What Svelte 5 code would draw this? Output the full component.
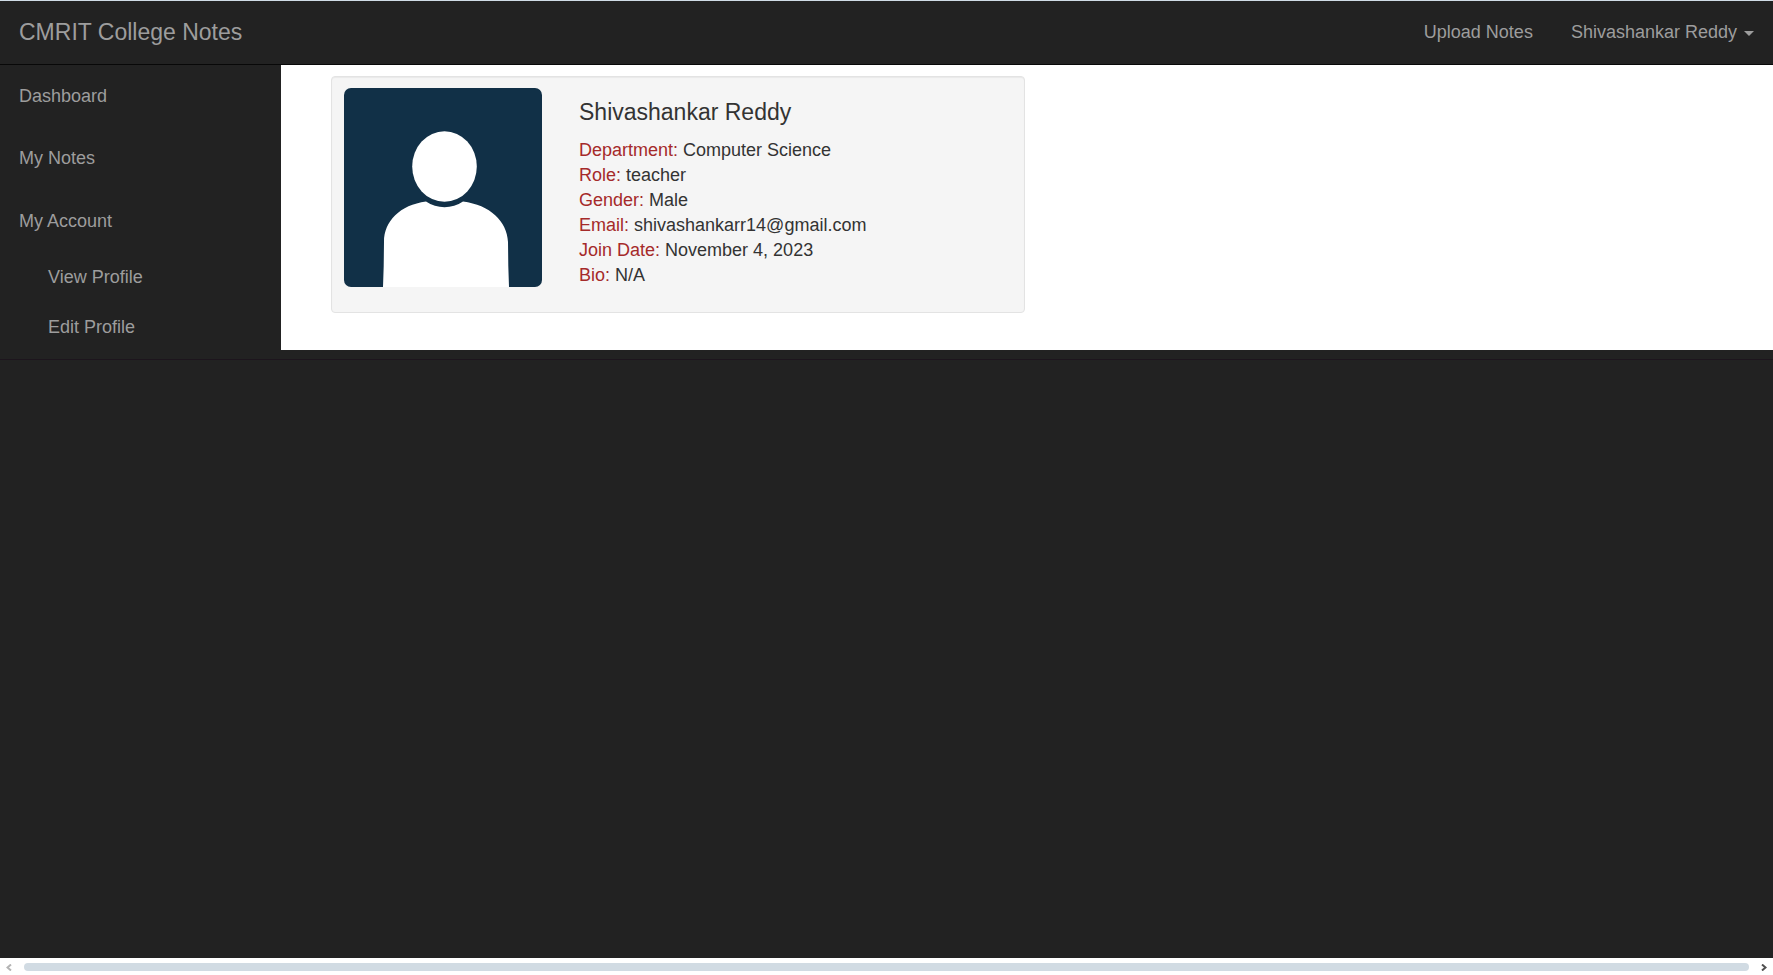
<script>
  const profile = [
    ['Department', 'Computer Science'],
    ['Role', 'teacher'],
    ['Gender', 'Male'],
    ['Email', 'shivashankarr14@gmail.com'],
    ['Join Date', 'November 4, 2023'],
    ['Bio', 'N/A']
  ];
</script>

<div class="page">
  <header class="navbar">
    <a class="brand" href="#home">CMRIT College Notes</a>
    <nav class="top-links" aria-label="Account">
      <a href="#upload">Upload Notes</a>
      <button type="button" class="user">Shivashankar Reddy <span class="caret"></span></button>
    </nav>
  </header>

  <div class="body">
    <nav class="sidebar" aria-label="Main">
      <ul class="menu">
        <li><a href="#dashboard">Dashboard</a></li>
        <li><a href="#notes">My Notes</a></li>
        <li>
          <a href="#account">My Account</a>
          <ul class="submenu">
            <li><a href="#view">View Profile</a></li>
            <li><a href="#edit">Edit Profile</a></li>
          </ul>
        </li>
      </ul>
    </nav>
    <main class="content">
      <section class="well">
        <svg class="avatar" viewBox="0 0 198 199" aria-hidden="true">
          <rect width="198" height="199" rx="7" fill="#113047" />
          <ellipse cx="100.500" cy="78.500" rx="32.300" ry="35.200" fill="#fff" />
          <path d="M82 113.500C56 117 40 133 40 154L39.700 178L39 199H165L164.300 178L164 154C163 133 146 117 119 113.500C108 121 93 121 82 113.500Z" fill="#fff" />
        </svg>
        <div class="details">
          <h1>Shivashankar Reddy</h1>
          <dl>
            {#each profile as [label, value]}
              <div><dt>{label}:</dt> <dd>{value}</dd></div>
            {/each}
          </dl>
        </div>
      </section>
    </main>
  </div>

  <div class="rest"></div>

  <footer class="scrollbar">
    <button type="button" aria-label="Scroll left">
      <svg width="6" height="7" viewBox="0 0 6 7"><path d="M5 0.500L1.500 3.500L5 6.500" fill="none" stroke="#b4b4b4" stroke-width="2" /></svg>
    </button>
    <div class="track"></div>
    <button type="button" aria-label="Scroll right">
      <svg width="6" height="7" viewBox="0 0 6 7"><path d="M1 0.500L4.500 3.500L1 6.500" fill="none" stroke="#505050" stroke-width="2" /></svg>
    </button>
  </footer>
</div>

<style>
  :global(body) {
    background: #222;
  }
  .page {
    display: flex;
    flex-direction: column;
    min-height: 100vh;
    box-sizing: border-box;
    border-top: 1px solid #d0dce6;
    background: #222;
    color: #333;
    font-family: "Liberation Sans", Arial, sans-serif;
    font-size: 18px;
    line-height: 25px;
  }
  a,
  button {
    color: #9d9d9d;
    text-decoration: none;
  }
  button {
    border: 0;
    padding: 0;
    background: none;
    font: inherit;
  }
  ul,
  dl,
  dd,
  h1 {
    margin: 0;
    padding: 0;
    list-style: none;
  }
  .navbar {
    display: flex;
    justify-content: space-between;
    align-items: center;
    padding: 19px;
    border-bottom: 1px solid #080808;
  }
  .brand,
  h1 {
    font-size: 23px;
    font-weight: 400;
    line-height: 25px;
  }
  .top-links {
    display: flex;
    gap: 38px;
  }
  .user {
    display: flex;
    align-items: center;
    gap: 7px;
  }
  .caret {
    margin-top: 2px;
    border: 5px solid transparent;
    border-top-color: #9d9d9d;
    border-bottom: 0;
  }
  .body {
    display: flex;
    align-items: flex-start;
    padding-bottom: 7px;
    border-bottom: 1px solid #1d151d;
  }
  .sidebar {
    flex: 0 0 281px;
  }
  .menu a {
    display: block;
    padding: 19px;
  }
  .menu > li > a {
    padding-bottom: 18px;
  }
  .menu > li:last-child {
    padding-top: 1px;
  }
  .submenu {
    padding-left: 29px;
  }
  .submenu a {
    padding: 13px 19px 12px;
  }
  .content {
    flex: 1;
    padding: 11px 54px 37px 50px;
    background: #fff;
  }
  .well {
    display: flex;
    align-items: flex-start;
    gap: 37px;
    width: 50%;
    min-width: 560px;
    box-sizing: border-box;
    padding: 11px 12px 24px;
    border: 1px solid #e3e3e3;
    border-radius: 4px;
    background: #f5f5f5;
    box-shadow: inset 0 1px 1px rgba(0, 0, 0, 0.05);
  }
  .avatar {
    width: 198px;
    height: 199px;
    flex: none;
  }
  .details {
    padding-top: 12px;
  }
  h1 {
    margin-bottom: 13px;
  }
  dt,
  dd {
    display: inline;
  }
  dt {
    color: #a52a2a;
  }
  .rest {
    flex: 1;
  }
  .scrollbar {
    display: flex;
    align-items: center;
    gap: 12px;
    height: 16px;
    padding: 1px 6px 0;
    background: #fff;
  }
  .scrollbar button {
    display: flex;
  }
  .track {
    flex: 1;
    height: 8px;
    border-radius: 4px;
    background: #d1dbe3;
  }
</style>
